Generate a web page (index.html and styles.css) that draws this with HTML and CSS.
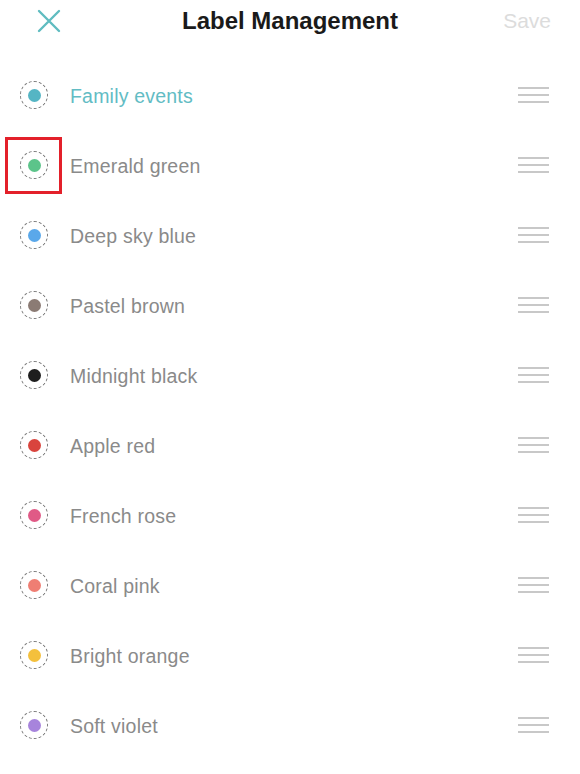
FILE: index.html
```html
<!DOCTYPE html>
<html>
<head>
<meta charset="utf-8">
<link rel="stylesheet" href="styles.css">
</head>
<body>
<div class="page">
  <header class="header">
    <svg class="close" width="24" height="24" viewBox="0 0 24 24"><path d="M2 2L22 22M22 2L2 22" stroke="#5fbcc0" stroke-width="2.4" stroke-linecap="round" fill="none"/></svg>
    <div class="title">Label Management</div>
    <div class="save">Save</div>
  </header>
  <ul class="list">
    <li class="row active"><span class="swatch"><span class="dot" style="background:#55b5c4"></span></span><span class="name">Family events</span><span class="handle"><i></i><i></i><i></i></span></li>
    <li class="row"><span class="swatch selected"><span class="dot" style="background:#5cc48a"></span></span><span class="name">Emerald green</span><span class="handle"><i></i><i></i><i></i></span></li>
    <li class="row"><span class="swatch"><span class="dot" style="background:#5aa8ea"></span></span><span class="name">Deep sky blue</span><span class="handle"><i></i><i></i><i></i></span></li>
    <li class="row"><span class="swatch"><span class="dot" style="background:#8b7b74"></span></span><span class="name">Pastel brown</span><span class="handle"><i></i><i></i><i></i></span></li>
    <li class="row"><span class="swatch"><span class="dot" style="background:#1e1e1e"></span></span><span class="name">Midnight black</span><span class="handle"><i></i><i></i><i></i></span></li>
    <li class="row"><span class="swatch"><span class="dot" style="background:#d9443d"></span></span><span class="name">Apple red</span><span class="handle"><i></i><i></i><i></i></span></li>
    <li class="row"><span class="swatch"><span class="dot" style="background:#e05a86"></span></span><span class="name">French rose</span><span class="handle"><i></i><i></i><i></i></span></li>
    <li class="row"><span class="swatch"><span class="dot" style="background:#ef7e73"></span></span><span class="name">Coral pink</span><span class="handle"><i></i><i></i><i></i></span></li>
    <li class="row"><span class="swatch"><span class="dot" style="background:#f4c03c"></span></span><span class="name">Bright orange</span><span class="handle"><i></i><i></i><i></i></span></li>
    <li class="row"><span class="swatch"><span class="dot" style="background:#a784dc"></span></span><span class="name">Soft violet</span><span class="handle"><i></i><i></i><i></i></span></li>
  </ul>
</div>
</body>
</html>
```

FILE: styles.css
```css
*, *::before, *::after { box-sizing: border-box; }
html, body { margin: 0; padding: 0; background: #fff; }
body { font-family: "Liberation Sans", Arial, sans-serif; width: 580px; height: 774px; overflow: hidden; }
.page { width: 580px; }
.header {
  height: 42px;
  display: flex;
  align-items: center;
  justify-content: space-between;
  padding: 0 29px 0 37px;
  position: relative;
}
.close { display: block; }
.title {
  position: absolute;
  left: 0; right: 0; top: 7px;
  text-align: center;
  font-size: 24px;
  font-weight: bold;
  color: #1a1a1a;
  pointer-events: none;
}
.save { font-size: 21px; color: #dcdcdc; }
.list { list-style: none; margin: 18px 0 0; padding: 0; }
.row {
  height: 70px;
  display: flex;
  align-items: center;
  padding: 0 31px 0 20px;
}
.swatch {
  width: 28px; height: 28px;
  border: 1.3px dashed #7a7a7a;
  border-radius: 50%;
  display: flex;
  align-items: center;
  justify-content: center;
  flex: none;
  position: relative;
}
.swatch.selected::after {
  content: "";
  position: absolute;
  left: -16px; top: -15px;
  width: 57px; height: 57px;
  border: 3px solid #e3202a;
}
.dot { width: 13px; height: 13px; border-radius: 50%; display: block; }
.name {
  flex: 1;
  margin-left: 22px;
  padding-top: 2px;
  font-size: 19.5px;
  color: #8a8a8a;
  letter-spacing: 0.2px;
}
.row.active .name { color: #62bcc4; }
.handle { display: flex; flex-direction: column; gap: 5px; width: 31px; }
.handle i { display: block; height: 2px; background: #c8c8c8; }
```
